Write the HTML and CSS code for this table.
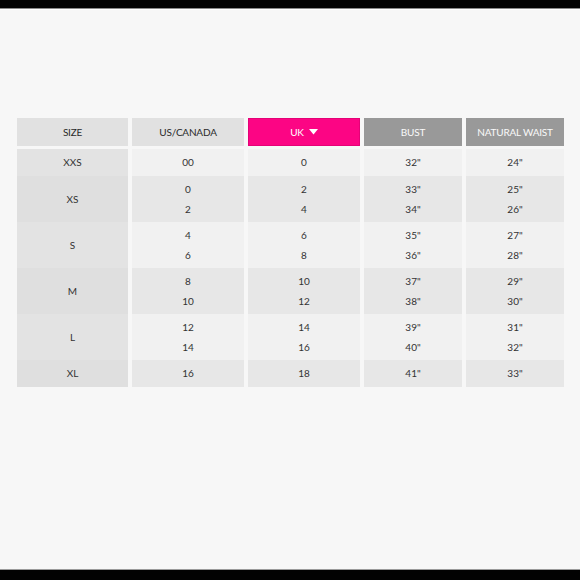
FILE: index.html
```html
<!DOCTYPE html>
<html>
<head>
<meta charset="utf-8">
<link rel="stylesheet" href="styles.css">
</head>
<body>
<div class="frame">
  <div class="bar-top"></div>
  <main class="stage">
    <div class="chart">
      <div class="row head">
        <div class="cell h-light">SIZE</div>
        <div class="cell h-light">US/CANADA</div>
        <div class="cell h-pink">UK <svg class="caret" width="9" height="6" viewBox="0 0 9 6"><path d="M0 0 H9 L4.5 5.5 Z" fill="#fff"/></svg></div>
        <div class="cell h-gray">BUST</div>
        <div class="cell h-gray">NATURAL WAIST</div>
      </div>
      <div class="body">
        <div class="row single light">
          <div class="cell size">XXS</div>
          <div class="cell">00</div>
          <div class="cell">0</div>
          <div class="cell">32"</div>
          <div class="cell">24"</div>
        </div>
        <div class="row dark">
          <div class="cell size">XS</div>
          <div class="cell"><span>0</span><span>2</span></div>
          <div class="cell"><span>2</span><span>4</span></div>
          <div class="cell"><span>33"</span><span>34"</span></div>
          <div class="cell"><span>25"</span><span>26"</span></div>
        </div>
        <div class="row light">
          <div class="cell size">S</div>
          <div class="cell"><span>4</span><span>6</span></div>
          <div class="cell"><span>6</span><span>8</span></div>
          <div class="cell"><span>35"</span><span>36"</span></div>
          <div class="cell"><span>27"</span><span>28"</span></div>
        </div>
        <div class="row dark">
          <div class="cell size">M</div>
          <div class="cell"><span>8</span><span>10</span></div>
          <div class="cell"><span>10</span><span>12</span></div>
          <div class="cell"><span>37"</span><span>38"</span></div>
          <div class="cell"><span>29"</span><span>30"</span></div>
        </div>
        <div class="row light">
          <div class="cell size">L</div>
          <div class="cell"><span>12</span><span>14</span></div>
          <div class="cell"><span>14</span><span>16</span></div>
          <div class="cell"><span>39"</span><span>40"</span></div>
          <div class="cell"><span>31"</span><span>32"</span></div>
        </div>
        <div class="row single dark">
          <div class="cell size">XL</div>
          <div class="cell">16</div>
          <div class="cell">18</div>
          <div class="cell">41"</div>
          <div class="cell">33"</div>
        </div>
      </div>
    </div>
  </main>
  <div class="bar-bottom"></div>
</div>
</body>
</html>
```

FILE: styles.css
```css
html, body {
  margin: 0;
  padding: 0;
  background: #000;
}
.frame {
  width: 580px;
  height: 580px;
  display: flex;
  flex-direction: column;
  font-family: Lato, "Open Sans", sans-serif;
  color: #333;
}
.bar-top {
  height: 8px;
  background: #020202;
  border-bottom: 1px solid #8a8a8a;
  flex: none;
}
.stage {
  flex: 1;
  background: #f7f7f7;
  border-top: 1px solid #fdfdfd;
  padding: 108px 0 0 17px;
}
.bar-bottom {
  height: 10px;
  background: #020202;
  border-top: 1px solid #9a9a9a;
  flex: none;
}
.chart {
  width: 546px;
}
.row {
  display: grid;
  grid-template-columns: 111px 112px 112px 98px 98px;
  column-gap: 4px;
}
.cell {
  display: flex;
  flex-direction: column;
  align-items: center;
  justify-content: center;
  font-size: 10px;
}
.head .cell {
  height: 28px;
  flex-direction: row;
  letter-spacing: -0.2px;
}
.h-light {
  background: #e1e1e1;
  color: #2a2a2a;
}
.h-pink {
  background: #fc0584;
  color: #fff;
  gap: 5px;
  box-shadow: inset 0 0 0 1px #e40277;
}
.h-gray {
  background: #999;
  color: #fafafa;
}
.caret {
  display: block;
}
.body {
  margin-top: 3px;
}
.body .cell {
  padding: 3px 0;
  line-height: 20px;
}
.body .single .cell {
  padding: 3px 0 4px;
}
.light .cell {
  background: #f1f1f1;
}
.dark .cell {
  background: #e7e7e7;
}
.light .cell.size {
  background: #e3e3e3;
}
.dark .cell.size {
  background: #dfdfdf;
}
```
